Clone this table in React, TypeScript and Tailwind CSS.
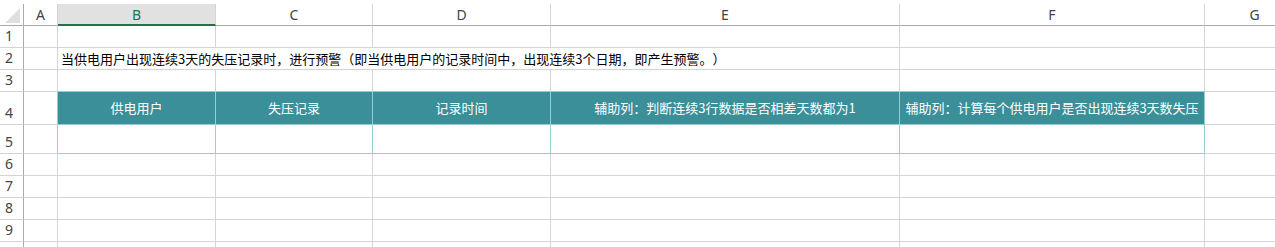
const cols = ["A", "B", "C", "D", "E", "F", "G"]
const rows = [1, 2, 3, 4, 5, 6, 7, 8, 9, 10]

const note =
  "当供电用户出现连续3天的失压记录时，进行预警（即当供电用户的记录时间中，出现连续3个日期，即产生预警。）"

const headers = [
  "供电用户",
  "失压记录",
  "记录时间",
  "辅助列：判断连续3行数据是否相差天数都为1",
  "辅助列：计算每个供电用户是否出现连续3天数失压",
]

const cjk = "font-['Noto_Sans_CJK_SC','Noto_Sans',sans-serif] [text-spacing-trim:space-all]"

function ColHead({ name }: { name: string }) {
  if (name === "B") {
    return (
      <div className="flex items-center justify-center bg-[#e1e1e1] border-r border-[#d4d4d4] border-b-2 border-b-[#217346] text-[14px] text-[#217346] font-['Noto_Sans',sans-serif]">
        {name}
      </div>
    )
  }
  return (
    <div className="flex items-center justify-center bg-white border-r border-[#d4d4d4] border-b border-b-[#ababab] text-[14px] text-[#444] font-['Noto_Sans',sans-serif]">
      {name}
    </div>
  )
}

// row 10 only peeks in at the bottom edge, so its number isn't visible
function RowHead({ n }: { n: number }) {
  return (
    <div className="flex items-end pl-[5px] pb-[1px] border-r border-r-[#ababab] border-b border-[#d4d4d4] text-[14px] leading-[20px] text-[#444] font-['Noto_Sans',sans-serif]">
      {n < 10 ? n : ""}
    </div>
  )
}

function Row({ n }: { n: number }) {
  if (n === 2) {
    return (
      <>
        <RowHead n={n} />
        <div className="border-r border-b border-[#d4d4d4]" />
        <div
          className={`col-span-4 flex items-center pl-[3px] whitespace-nowrap border-r border-b border-[#d4d4d4] text-[13px] text-black ${cjk}`}
        >
          {note}
        </div>
        <div className="border-r border-b border-[#d4d4d4]" />
        <div className="border-r border-b border-[#d4d4d4]" />
      </>
    )
  }
  if (n === 3) {
    return (
      <>
        <RowHead n={n} />
        <div className="border-r border-b border-[#d4d4d4]" />
        {headers.map((_, i) => (
          <div key={i} className="border-r border-[#d4d4d4] border-b border-b-[#92d0d6]" />
        ))}
        <div className="border-r border-b border-[#d4d4d4]" />
      </>
    )
  }
  if (n === 4) {
    return (
      <>
        <RowHead n={n} />
        <div className="border-r border-r-[#92d0d6] border-b border-[#d4d4d4]" />
        {headers.map((h) => (
          <div
            key={h}
            className={`flex items-center justify-center whitespace-nowrap bg-[#3a8f99] border-r border-b border-[#92d0d6] text-[13px] text-white ${cjk}`}
          >
            {h}
          </div>
        ))}
        <div className="border-r border-b border-[#d4d4d4]" />
      </>
    )
  }
  if (n === 5) {
    return (
      <>
        <RowHead n={n} />
        <div className="border-r border-r-[#92d0d6] border-b border-[#d4d4d4]" />
        {headers.map((_, i) => (
          <div key={i} className="border-r border-b border-[#92d0d6]" />
        ))}
        <div className="border-r border-b border-[#d4d4d4]" />
      </>
    )
  }
  return (
    <>
      <RowHead n={n} />
      {cols.map((c) => (
        <div key={c} className="border-r border-b border-[#d4d4d4]" />
      ))}
    </>
  )
}

export default function App() {
  return (
    <div className="h-[247px] w-[1275px] overflow-hidden bg-white pt-1">
      <div className="grid grid-cols-[24px_34px_158px_157px_178px_349px_305px_100px] grid-rows-[22px_22px_22px_22px_33px_29px_22px_22px_22px_22px_22px]">
        {/* corner */}
        <div className="relative border-r border-b border-[#ababab]">
          <svg className="absolute left-[5px] top-[4px]" width="15" height="15" viewBox="0 0 15 15">
            <polygon points="15,0 15,15 0,15" fill="#dfdfdf" />
          </svg>
        </div>
        {cols.map((c) => (
          <ColHead key={c} name={c} />
        ))}
        {rows.map((n) => (
          <Row key={n} n={n} />
        ))}
      </div>
    </div>
  )
}
